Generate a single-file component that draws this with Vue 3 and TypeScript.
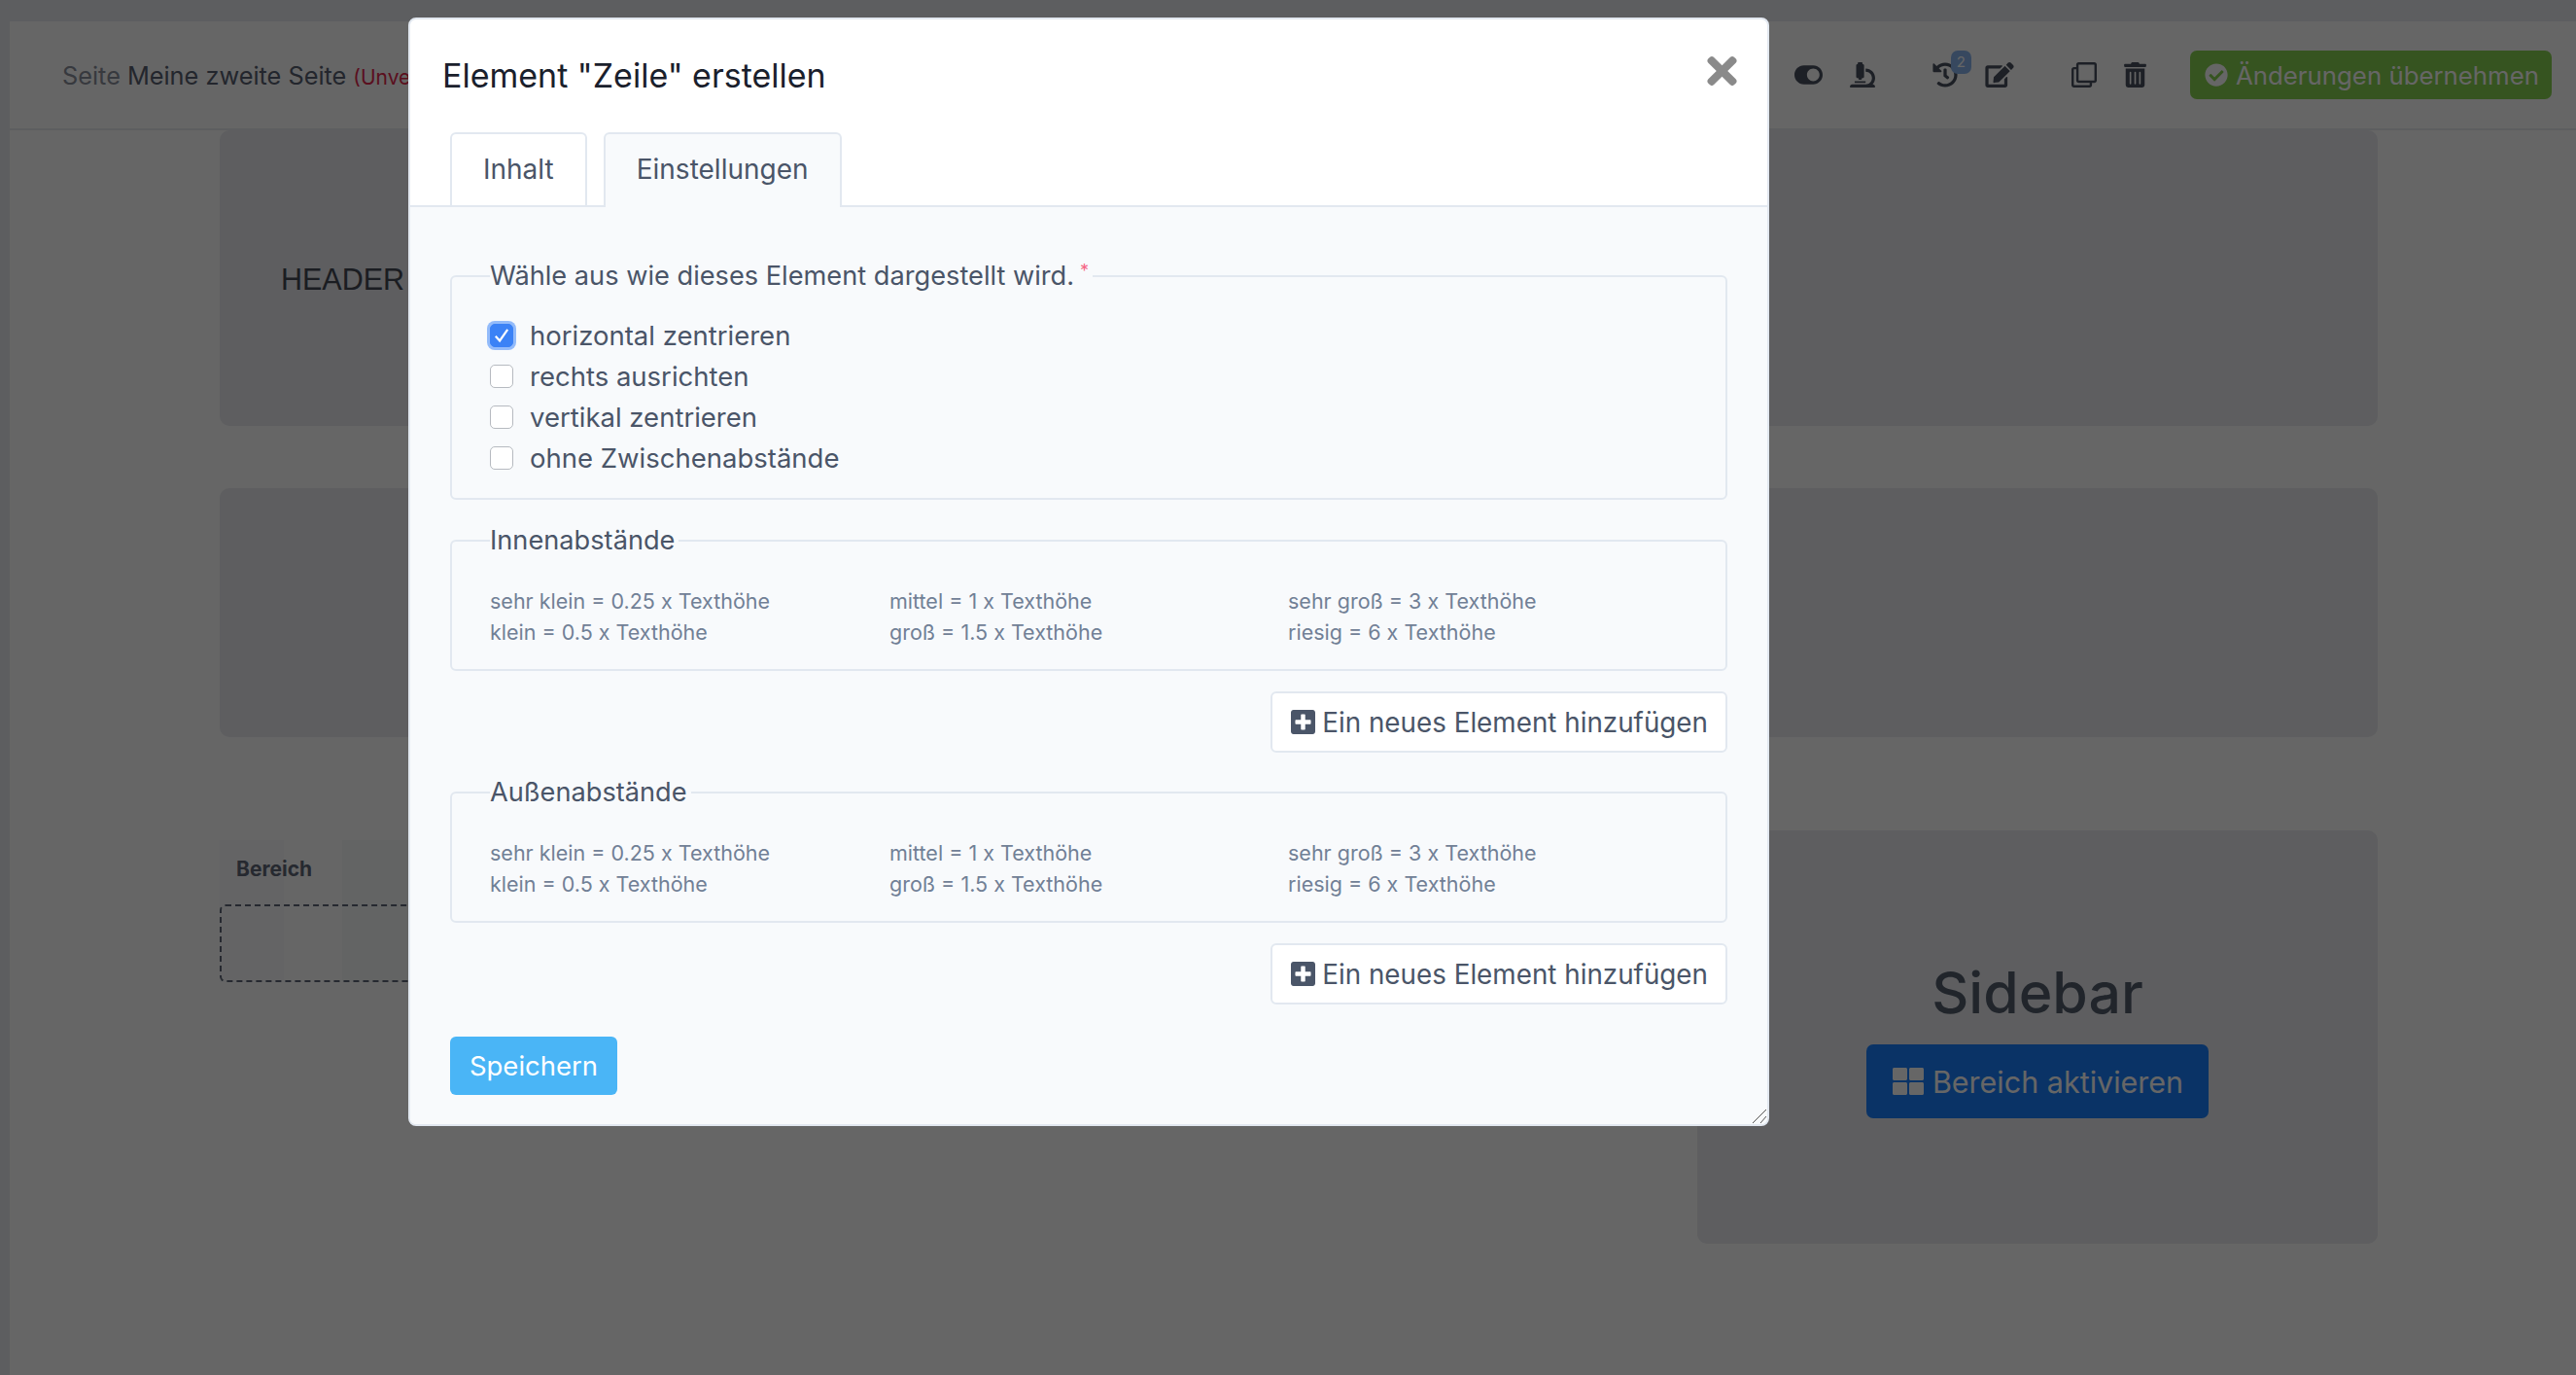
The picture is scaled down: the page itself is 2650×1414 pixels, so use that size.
<script setup lang="ts">
const icons: Record<string, { box: string; d: string }> = {
  toggle: {
    box: '0 0 576 512',
    d: 'M384 64H192C86 64 0 150 0 256s86 192 192 192h192c106 0 192-86 192-192S490 64 384 64zm0 320c-70.8 0-128-57.3-128-128 0-70.8 57.3-128 128-128 70.8 0 128 57.3 128 128 0 70.8-57.3 128-128 128z'
  },
  microscope: {
    box: '0 0 512 512',
    d: 'M160 320h12v16c0 8.84 7.16 16 16 16h40c8.84 0 16-7.16 16-16v-16h12c17.67 0 32-14.33 32-32V64c0-17.67-14.33-32-32-32V16c0-8.84-7.16-16-16-16h-64c-8.84 0-16 7.16-16 16v16c-17.67 0-32 14.33-32 32v224c0 17.67 14.33 32 32 32zm304 128h-1.29C493.24 413.99 512 369.2 512 320c0-105.88-86.12-192-192-192v64c70.58 0 128 57.42 128 128s-57.42 128-128 128H48c-26.51 0-48 21.49-48 48 0 8.84 7.16 16 16 16h480c8.84 0 16-7.16 16-16 0-26.51-21.49-48-48-48zm-360-32h208c4.42 0 8-3.58 8-8v-16c0-4.42-3.58-8-8-8H104c-4.42 0-8 3.58-8 8v16c0 4.42 3.58 8 8 8z'
  },
  history: {
    box: '0 0 512 512',
    d: 'M504 255.531c.253 136.64-111.18 248.372-247.82 248.468-59.015.042-113.223-20.53-155.822-54.911-11.077-8.94-11.905-25.541-1.839-35.607l11.267-11.267c8.609-8.609 22.353-9.551 31.891-1.984C173.062 425.135 212.781 440 256 440c101.705 0 184-82.311 184-184 0-101.705-82.311-184-184-184-48.814 0-93.149 18.969-126.068 49.932l50.754 50.754c10.08 10.08 2.941 27.314-11.313 27.314H24c-8.837 0-16-7.163-16-16V38.627c0-14.254 17.234-21.393 27.314-11.314l49.372 49.372C129.209 34.136 189.552 8 256 8c136.81 0 247.747 110.78 248 247.531zm-180.912 78.784l9.823-12.63c8.138-10.463 6.253-25.542-4.21-33.679L288 256.349V152c0-13.255-10.745-24-24-24h-16c-13.255 0-24 10.745-24 24v135.651l65.409 50.874c10.463 8.137 25.541 6.253 33.679-4.21z'
  },
  edit: {
    box: '0 0 576 512',
    d: 'M402.6 83.2l90.2 90.2c3.8 3.8 3.8 10 0 13.8L274.4 405.6l-92.8 10.3c-12.4 1.4-22.9-9.1-21.5-21.5l10.3-92.8L388.8 83.2c3.8-3.8 10-3.8 13.8 0zm162-22.9l-48.8-48.8c-15.2-15.2-39.9-15.2-55.2 0l-35.4 35.4c-3.8 3.8-3.8 10 0 13.8l90.2 90.2c3.8 3.8 10 3.8 13.8 0l35.4-35.4c15.2-15.3 15.2-40 0-55.2zM384 346.2V448H64V128h229.8c3.2 0 6.2-1.3 8.5-3.5l40-40c7.6-7.6 2.2-20.5-8.5-20.5H48C21.5 64 0 85.5 0 112v352c0 26.5 21.5 48 48 48h352c26.5 0 48-21.5 48-48V306.2c0-10.7-12.9-16-20.5-8.5l-40 40c-2.2 2.3-3.5 5.3-3.5 8.5z'
  },
  clone: {
    box: '0 0 512 512',
    d: 'M464 0H144c-26.51 0-48 21.49-48 48v48H48c-26.51 0-48 21.49-48 48v320c0 26.51 21.49 48 48 48h320c26.51 0 48-21.49 48-48v-48h48c26.51 0 48-21.49 48-48V48c0-26.51-21.49-48-48-48zM362 464H54a6 6 0 0 1-6-6V150a6 6 0 0 1 6-6h42v224c0 26.51 21.49 48 48 48h224v42a6 6 0 0 1-6 6zm96-96H150a6 6 0 0 1-6-6V54a6 6 0 0 1 6-6h308a6 6 0 0 1 6 6v308a6 6 0 0 1-6 6z'
  },
  trash: {
    box: '0 0 448 512',
    d: 'M32 464a48 48 0 0 0 48 48h288a48 48 0 0 0 48-48V128H32zm272-256a16 16 0 0 1 32 0v224a16 16 0 0 1-32 0zm-96 0a16 16 0 0 1 32 0v224a16 16 0 0 1-32 0zm-96 0a16 16 0 0 1 32 0v224a16 16 0 0 1-32 0zM432 32H312l-9.4-18.7A24 24 0 0 0 281.1 0H166.8a23.72 23.72 0 0 0-21.4 13.3L136 32H16A16 16 0 0 0 0 48v32a16 16 0 0 0 16 16h416a16 16 0 0 0 16-16V48a16 16 0 0 0-16-16z'
  },
  check: {
    box: '0 0 512 512',
    d: 'M504 256c0 136.967-111.033 248-248 248S8 392.967 8 256 119.033 8 256 8s248 111.033 248 248zM227.314 387.314l184-184c6.248-6.248 6.248-16.379 0-22.627l-22.627-22.627c-6.248-6.249-16.379-6.249-22.628 0L216 308.118l-70.059-70.059c-6.248-6.248-16.379-6.248-22.628 0l-22.627 22.627c-6.248 6.248-6.248 16.379 0 22.627l104 104c6.249 6.249 16.379 6.249 22.628.001z'
  },
  plus: {
    box: '0 0 448 512',
    d: 'M400 32H48C21.5 32 0 53.5 0 80v352c0 26.5 21.5 48 48 48h352c26.5 0 48-21.5 48-48V80c0-26.5-21.5-48-48-48zm-32 252c0 6.6-5.4 12-12 12h-92v92c0 6.6-5.4 12-12 12h-56c-6.6 0-12-5.4-12-12v-92H92c-6.6 0-12-5.4-12-12v-56c0-6.6 5.4-12 12-12h92v-92c0-6.6 5.4-12 12-12h56c6.6 0 12 5.4 12 12v92h92c6.6 0 12 5.4 12 12v56z'
  },
  grid: {
    box: '0 0 512 512',
    d: 'M296 32h192c13.255 0 24 10.745 24 24v160c0 13.255-10.745 24-24 24H296c-13.255 0-24-10.745-24-24V56c0-13.255 10.745-24 24-24zm-80 0H24C10.745 32 0 42.745 0 56v160c0 13.255 10.745 24 24 24h192c13.255 0 24-10.745 24-24V56c0-13.255-10.745-24-24-24zM0 296v160c0 13.255 10.745 24 24 24h192c13.255 0 24-10.745 24-24V296c0-13.255-10.745-24-24-24H24c-13.255 0-24 10.745-24 24zm296 184h192c13.255 0 24-10.745 24-24V296c0-13.255-10.745-24-24-24H296c-13.255 0-24 10.745-24 24v160c0 13.255 10.745 24 24 24z'
  },
  times: {
    box: '0 0 352 512',
    d: 'M242.72 256l100.07-100.07c12.28-12.28 12.28-32.19 0-44.48l-22.24-22.24c-12.28-12.28-32.19-12.28-44.48 0L176 189.28 75.93 89.21c-12.28-12.28-32.19-12.28-44.48 0L9.21 111.45c-12.28 12.28-12.28 32.19 0 44.48L109.28 256 9.21 356.07c-12.28 12.28-12.28 32.19 0 44.48l22.24 22.24c12.28 12.28 32.2 12.28 44.48 0L176 322.72l100.07 100.07c12.28 12.28 32.2 12.28 44.48 0l22.24-22.24c12.28-12.28 12.28-32.19 0-44.48L242.72 256z'
  }
}

const options = [
  { label: 'horizontal zentrieren', checked: true },
  { label: 'rechts ausrichten', checked: false },
  { label: 'vertikal zentrieren', checked: false },
  { label: 'ohne Zwischenabstände', checked: false }
]

const spacingColumns = [
  ['sehr klein = 0.25 x Texthöhe', 'klein = 0.5 x Texthöhe'],
  ['mittel = 1 x Texthöhe', 'groß = 1.5 x Texthöhe'],
  ['sehr groß = 3 x Texthöhe', 'riesig = 6 x Texthöhe']
]

const spacingGroups = ['Innenabstände', 'Außenabstände']
</script>

<template>
  <div class="page">
    <div class="main">
      <header class="toolbar">
        <div class="crumb">
          <span class="crumb-muted">Seite</span>
          <span class="crumb-name">Meine zweite Seite</span>
          <span class="crumb-state">(Unve</span>
        </div>
        <div class="tools">
          <div class="tool-group">
            <svg class="ico ico-toggle" :viewBox="icons.toggle.box"><path :d="icons.toggle.d" /></svg>
            <svg class="ico ico-micro" :viewBox="icons.microscope.box"><path :d="icons.microscope.d" /></svg>
          </div>
          <div class="tool-group">
            <span class="history">
              <svg class="ico ico-micro" :viewBox="icons.history.box"><path :d="icons.history.d" /></svg>
              <span class="badge">2</span>
            </span>
            <svg class="ico ico-edit" :viewBox="icons.edit.box"><path :d="icons.edit.d" /></svg>
          </div>
          <div class="tool-group">
            <svg class="ico ico-micro" :viewBox="icons.clone.box"><path :d="icons.clone.d" /></svg>
            <svg class="ico ico-trash" :viewBox="icons.trash.box"><path :d="icons.trash.d" /></svg>
          </div>
          <button class="apply" type="button">
            <svg class="apply-ico" :viewBox="icons.check.box"><path :d="icons.check.d" /></svg>
            Änderungen übernehmen
          </button>
        </div>
      </header>

      <main class="content">
        <section class="card card-header"><span class="header-label">HEADER</span></section>
        <section class="card card-second"></section>
        <div class="lower">
          <div class="area">
            <div class="area-title">Bereich</div>
            <div class="area-drop"></div>
          </div>
          <aside class="card sidebar">
            <h2 class="sidebar-title">Sidebar</h2>
            <button class="activate" type="button">
              <svg class="activate-ico" :viewBox="icons.grid.box"><path :d="icons.grid.d" /></svg>
              Bereich aktivieren
            </button>
          </aside>
        </div>
      </main>
    </div>

    <div class="backdrop"></div>

    <div class="modal">
      <div class="modal-head">
        <h1 class="modal-title">Element "Zeile" erstellen</h1>
        <svg class="close" :viewBox="icons.times.box"><path :d="icons.times.d" /></svg>
      </div>
      <nav class="tabs">
        <span class="tab">Inhalt</span>
        <span class="tab tab-active">Einstellungen</span>
      </nav>
      <form class="modal-body" @submit.prevent>
        <fieldset class="group group-options">
          <legend class="legend">Wähle aus wie dieses Element dargestellt wird.<span class="required">*</span></legend>
          <label v-for="opt in options" :key="opt.label" class="option">
            <span class="box" :class="{ 'box-on': opt.checked }">
              <svg v-if="opt.checked" viewBox="0 0 16 16" class="tick"><path d="M3.5 8.5 6.6 12 12.5 3.5" /></svg>
            </span>
            {{ opt.label }}
          </label>
        </fieldset>

        <template v-for="name in spacingGroups" :key="name">
          <fieldset class="group group-spacing">
            <legend class="legend">{{ name }}</legend>
            <div class="hints">
              <div v-for="(col, i) in spacingColumns" :key="i" class="hint-col">
                <div v-for="line in col" :key="line" class="hint">{{ line }}</div>
              </div>
            </div>
          </fieldset>
          <div class="add-row">
            <button class="add" type="button">
              <svg class="add-ico" :viewBox="icons.plus.box"><path :d="icons.plus.d" /></svg>
              Ein neues Element hinzufügen
            </button>
          </div>
        </template>

        <button class="save" type="submit">Speichern</button>
      </form>
      <svg class="grip" viewBox="0 0 16 16"><path d="M1 15 15 1M9 15 15 8" /></svg>
    </div>
  </div>
</template>

<style>
html,
body {
  margin: 0;
  background: #fff;
}
</style>

<style scoped>
.page {
  position: relative;
  width: 2650px;
  height: 1414px;
  overflow: hidden;
  box-sizing: border-box;
  padding: 22px 0 0 10px;
  background: #e9ecf1;
  font-family: Inter, "Open Sans", sans-serif;
  color: #4a5568;
}

.main {
  height: 100%;
  background: #fff;
}

.toolbar {
  display: flex;
  align-items: center;
  justify-content: space-between;
  box-sizing: border-box;
  height: 112px;
  padding: 0 25px 0 54px;
  border-bottom: 2px solid #e9ecf1;
  background: #fff;
}

.crumb {
  display: flex;
  gap: 7px;
  align-items: baseline;
  font-size: 25.3px;
  white-space: nowrap;
}

.crumb-muted {
  color: #8a909c;
}

.crumb-name {
  color: #586070;
}

.crumb-state {
  color: #e2264d;
  font-size: 21px;
}

.tools {
  display: flex;
  align-items: center;
}

.tool-group {
  display: flex;
  align-items: center;
  gap: 28px;
  margin-right: 59px;
}

.tool-group:nth-child(3) {
  margin-right: 45px;
}

.ico {
  display: block;
  fill: #4a5260;
}

.ico-toggle {
  width: 29px;
  height: 26px;
}

.ico-micro {
  width: 26px;
  height: 26px;
}

.ico-edit {
  width: 30px;
  height: 26px;
}

.ico-trash {
  width: 23px;
  height: 26px;
}

.history {
  position: relative;
  display: block;
}

.badge {
  position: absolute;
  top: -12px;
  left: 19px;
  width: 21px;
  height: 24px;
  border-radius: 7px;
  background: #8ab5ee;
  color: #fff;
  font-size: 15px;
  line-height: 24px;
  text-align: center;
}

.apply {
  display: flex;
  align-items: center;
  gap: 8px;
  height: 50px;
  padding: 0 13px 0 15px;
  border: none;
  border-radius: 7px;
  background: #87d250;
  color: #fff;
  font: inherit;
  font-size: 25.8px;
  white-space: nowrap;
}

.apply-ico {
  width: 24px;
  height: 24px;
  fill: #fff;
}

.content {
  padding-left: 216px;
  width: 2220px;
}

.card {
  border-radius: 10px;
  background: #eaecf0;
}

.card-header {
  display: flex;
  align-items: center;
  height: 304px;
  padding: 2px 0 0 63px;
  box-sizing: border-box;
}

.header-label {
  color: #444a55;
  font-family: "Liberation Sans", sans-serif;
  font-size: 30.5px;
}

.card-second {
  height: 256px;
  margin-top: 64px;
}

.lower {
  display: flex;
  justify-content: space-between;
  margin-top: 96px;
}

.area {
  width: 1480px;
  height: 146px;
  margin-top: 10px;
  background: linear-gradient(to right, #fbfbfc 0 66px, #fefefe 66px 126px, #f8f9fa 126px);
}

.area-title {
  padding: 17px 0 0 17px;
  height: 49px;
  color: #5f6878;
  font-size: 21px;
  font-weight: 700;
}

.area-drop {
  box-sizing: border-box;
  height: 80px;
  border: 2px dashed #5f6878;
  border-radius: 6px;
}

.sidebar {
  display: flex;
  flex-direction: column;
  align-items: center;
  box-sizing: border-box;
  width: 700px;
  height: 425px;
  padding-top: 127px;
}

.sidebar-title {
  margin: 0;
  color: #535d6d;
  font-size: 59px;
  font-weight: 500;
  line-height: 80px;
}

.activate {
  display: flex;
  align-items: center;
  gap: 9px;
  height: 76px;
  margin-top: 13px;
  padding: 0 26px 0 27px;
  border: none;
  border-radius: 7px;
  background: #1980ff;
  color: #fff;
  font: inherit;
  font-size: 30.5px;
}

.activate-ico {
  width: 32px;
  height: 32px;
  fill: #fff;
}

.backdrop {
  position: absolute;
  inset: 0;
  background: rgba(0, 0, 0, 0.6);
}

.modal {
  position: absolute;
  top: 18px;
  left: 420px;
  box-sizing: border-box;
  width: 1400px;
  height: 1140px;
  overflow: hidden;
  border: 2px solid #e2e8f0;
  border-radius: 8px;
  background: #fff;
}

.modal-head {
  display: flex;
  align-items: flex-start;
  justify-content: space-between;
  height: 116px;
  box-sizing: border-box;
  padding: 36px 31px 0 33px;
}

.modal-title {
  margin: 0;
  color: #1a202c;
  font-size: 34px;
  font-weight: 400;
  line-height: 44px;
}

.close {
  width: 31px;
  height: 44px;
  margin-top: -5px;
  fill: #8a8a8a;
}

.tabs {
  display: flex;
  gap: 17px;
  box-sizing: border-box;
  height: 77px;
  padding-left: 41px;
  border-bottom: 2px solid #e2e8f0;
}

.tab {
  box-sizing: border-box;
  height: 77px;
  padding: 0 32px;
  border: 2px solid #e2e8f0;
  border-bottom: none;
  border-radius: 6px 6px 0 0;
  color: #4a5568;
  font-size: 28px;
  line-height: 73px;
}

.tab-active {
  background: #f8fafc;
}

.modal-body {
  height: 943px;
  box-sizing: border-box;
  padding: 53px 41px 0;
  background: #f8fafc;
}

.group {
  min-width: 0;
  margin: 0;
  border: 2px solid #e2e8f0;
  border-radius: 6px;
}

.group-options {
  padding: 22px 39px 20px;
}

.group-spacing {
  margin-top: 24px;
  padding: 28px 39px 22px;
}

.legend {
  padding: 0 4px 0 0;
  color: #4a5568;
  font-size: 27.2px;
  line-height: 36px;
}

.required {
  position: relative;
  top: -8px;
  margin-left: 6px;
  color: #f56585;
  font-size: 18px;
  line-height: 0;
}

.option {
  display: flex;
  align-items: center;
  gap: 17px;
  height: 42px;
  color: #4a5568;
  font-size: 27.5px;
}

.box {
  display: block;
  box-sizing: border-box;
  width: 24px;
  height: 24px;
  border: 1px solid #b6bac0;
  border-radius: 5px;
  background: #fff;
}

.box-on {
  border-color: #3b82f6;
  background: #3b82f6;
  box-shadow: 0 0 0 3px #93bbfa;
}

.tick {
  display: block;
  fill: none;
  stroke: #fff;
  stroke-width: 1.6;
}

.hints {
  display: grid;
  grid-template-columns: 411px 410px 1fr;
}

.hint {
  height: 32px;
  color: #718096;
  font-size: 21.5px;
  line-height: 32px;
}

.add-row {
  display: flex;
  justify-content: flex-end;
  margin-top: 21px;
  margin-bottom: 23px;
}

.add {
  display: flex;
  align-items: center;
  gap: 7px;
  box-sizing: border-box;
  height: 63px;
  padding: 0 18px 0 19px;
  border: 2px solid #e2e8f0;
  border-radius: 6px;
  background: #fff;
  color: #4a5568;
  font: inherit;
  font-size: 27.8px;
}

.add-ico {
  width: 25px;
  height: 29px;
  fill: #4a5568;
}

.save {
  display: block;
  width: 172px;
  height: 60px;
  margin-top: 33px;
  padding: 0;
  border: none;
  border-radius: 6px;
  background: #4ab5f6;
  color: #fff;
  font: inherit;
  font-size: 27.5px;
}

.group-spacing + .add-row + .group-spacing {
  margin-top: 0;
}

.grip {
  position: absolute;
  right: 0;
  bottom: 0;
  width: 16px;
  height: 16px;
  fill: none;
  stroke: #555;
  stroke-width: 1;
}
</style>
